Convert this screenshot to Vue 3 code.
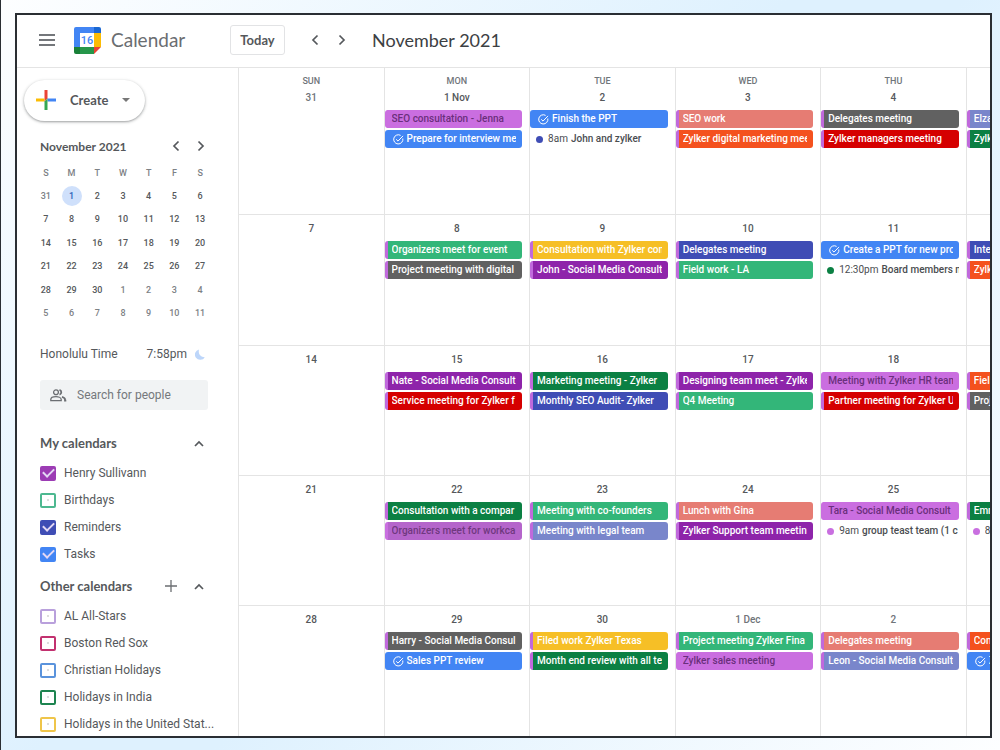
<script setup>
import { ref } from 'vue'

const weekdays = ['S', 'M', 'T', 'W', 'T', 'F', 'S']
const miniWeeks = [
  [31, 1, 2, 3, 4, 5, 6],
  [7, 8, 9, 10, 11, 12, 13],
  [14, 15, 16, 17, 18, 19, 20],
  [21, 22, 23, 24, 25, 26, 27],
  [28, 29, 30, 1, 2, 3, 4],
  [5, 6, 7, 8, 9, 10, 11],
]
const isOutside = (week, day) => (week === 0 && day > 20) || (week > 3 && day < 20)
const isToday = (week, day) => week === 0 && day === 1

const myCalendars = ref([
  { name: 'Henry Sullivann', color: 'violet', on: true },
  { name: 'Birthdays', color: 'mint', on: false },
  { name: 'Reminders', color: 'indigo', on: true },
  { name: 'Tasks', color: 'azure', on: true },
])
const otherCalendars = ref([
  { name: 'AL All-Stars', color: 'lilac', on: false },
  { name: 'Boston Red Sox', color: 'crimson', on: false },
  { name: 'Christian Holidays', color: 'sky', on: false },
  { name: 'Holidays in India', color: 'forest', on: false },
  { name: 'Holidays in the United Stat...', color: 'amber', on: false },
])

const ev = (title, color) => ({ kind: 'event', title, color })
const task = (title) => ({ kind: 'task', title, color: 'blue' })
const timed = (time, title, color) => ({ kind: 'timed', time, title, color })

const weeks = [
  [
    { head: 'SUN', date: '31', dim: true, items: [] },
    { head: 'MON', date: '1 Nov', items: [ev('SEO consultation - Jenna', 'orchid'), task('Prepare for interview me')] },
    { head: 'TUE', date: '2', items: [task('Finish the PPT'), timed('8am', 'John and zylker', 'indigo')] },
    { head: 'WED', date: '3', items: [ev('SEO work', 'salmon'), ev('Zylker digital marketing mee', 'orange')] },
    { head: 'THU', date: '4', items: [ev('Delegates meeting', 'gray'), ev('Zylker managers meeting', 'red')] },
    { head: '', date: '', items: [ev('Elza', 'slate'), ev('Zylk', 'green')] },
  ],
  [
    { date: '7', items: [] },
    { date: '8', items: [ev('Organizers meet for event', 'mint'), ev('Project meeting with digital', 'gray')] },
    { date: '9', items: [ev('Consultation with Zylker con', 'yellow'), ev('John - Social Media Consult', 'purple')] },
    { date: '10', items: [ev('Delegates meeting', 'indigo'), ev('Field work - LA', 'mint')] },
    { date: '11', items: [task('Create a PPT for new pro'), timed('12:30pm', 'Board members m', 'green')] },
    { date: '', items: [ev('Inte', 'indigo'), ev('Zylk', 'orange')] },
  ],
  [
    { date: '14', items: [] },
    { date: '15', items: [ev('Nate - Social Media Consult', 'purple'), ev('Service meeting for Zylker f', 'red')] },
    { date: '16', items: [ev('Marketing meeting - Zylker', 'green'), ev('Monthly SEO Audit- Zylker', 'indigo')] },
    { date: '17', items: [ev('Designing team meet - Zylke', 'purple'), ev('Q4 Meeting', 'mint')] },
    { date: '18', items: [ev('Meeting with Zylker HR team', 'orchid'), ev('Partner meeting for Zylker U', 'red')] },
    { date: '', items: [ev('Fiel', 'orange'), ev('Proj', 'gray')] },
  ],
  [
    { date: '21', items: [] },
    { date: '22', items: [ev('Consultation with a compar', 'green'), ev('Organizers meet for workca', 'plum')] },
    { date: '23', items: [ev('Meeting with co-founders', 'mint'), ev('Meeting with legal team', 'slate')] },
    { date: '24', items: [ev('Lunch with Gina', 'salmon'), ev('Zylker Support team meetin', 'purple')] },
    { date: '25', items: [ev('Tara - Social Media Consult', 'orchid'), timed('9am', 'group teast team (1 c', 'orchid')] },
    { date: '', items: [ev('Emm', 'green'), timed('8', '', 'orchid')] },
  ],
  [
    { date: '28', items: [] },
    { date: '29', items: [ev('Harry - Social Media Consul', 'gray'), task('Sales PPT review')] },
    { date: '30', items: [ev('Filed work Zylker Texas', 'yellow'), ev('Month end review with all te', 'green')] },
    { date: '1 Dec', dim: true, items: [ev('Project meeting Zylker Fina', 'mint'), ev('Zylker sales meeting', 'orchid')] },
    { date: '2', dim: true, items: [ev('Delegates meeting', 'salmon'), ev('Leon - Social Media Consult', 'slate')] },
    { date: '', items: [ev('Con', 'orange'), task('Z')] },
  ],
]
</script>

<template>
  <div class="page">
    <div class="window">
      <header class="topbar">
        <button class="icon-btn" aria-label="Main menu">
          <svg width="16" height="12" viewBox="0 0 16 12"><path d="M0 1h16M0 6h16M0 11h16" stroke="#74777b" stroke-width="2" /></svg>
        </button>
        <svg class="logo" width="27" height="27" viewBox="0 0 27 27" aria-hidden="true">
          <path d="M2 0H20V6H6V20H0V2Q0 0 2 0Z" fill="#4285f4" />
          <path d="M20 0H25Q27 0 27 2V6H20Z" fill="#1a67d2" />
          <path d="M20 6H27V20H20Z" fill="#fbbc04" />
          <path d="M6 20H20V27H6Z" fill="#26964a" />
          <path d="M0 20H6V27H2Q0 27 0 25Z" fill="#188038" />
          <path d="M20 20H27L20 27Z" fill="#ea4335" />
          <path d="M6 6H20V20H6Z" fill="#fff" />
          <text x="13" y="17" text-anchor="middle" class="logo-text">16</text>
        </svg>
        <span class="brand">Calendar</span>
        <button class="today">Today</button>
        <button class="icon-btn prev" aria-label="Previous month">
          <svg width="8" height="12" viewBox="0 0 8 12"><path d="M6.5 1.5 2 6l4.5 4.5" class="chev" /></svg>
        </button>
        <button class="icon-btn next" aria-label="Next month">
          <svg width="8" height="12" viewBox="0 0 8 12"><path d="M1.5 1.5 6 6l-4.5 4.5" class="chev" /></svg>
        </button>
        <h1>November 2021</h1>
      </header>

      <div class="body">
        <aside class="sidebar">
          <button class="create">
            <svg width="20" height="20" viewBox="0 0 20 20" aria-hidden="true">
              <path d="M8.5 0h3v8.500l-3 3Z" fill="#ea4335" />
              <path d="M0 8.500h8.500v3H0Z" fill="#fbbc04" />
              <path d="M11.500 8.500H20v3h-8.500Z" fill="#4285f4" />
              <path d="M8.500 11.500l3-3V20h-3Z" fill="#34a853" />
            </svg>
            <span>Create</span>
            <svg width="8" height="4" viewBox="0 0 8 4" aria-hidden="true"><path d="M0 0h8L4 4Z" fill="#777" /></svg>
          </button>

          <div class="mini-head">
            <h2>November 2021</h2>
            <button class="icon-btn" aria-label="Previous">
              <svg width="8" height="12" viewBox="0 0 8 12"><path d="M6.500 1.500 2 6l4.500 4.500" class="chev" /></svg>
            </button>
            <button class="icon-btn" aria-label="Next">
              <svg width="8" height="12" viewBox="0 0 8 12"><path d="M1.500 1.500 6 6l-4.500 4.500" class="chev" /></svg>
            </button>
          </div>
          <table class="mini">
            <thead>
              <tr><th v-for="(d, i) in weekdays" :key="i" scope="col">{{ d }}</th></tr>
            </thead>
            <tbody>
              <tr v-for="(week, w) in miniWeeks" :key="w">
                <td v-for="d in week" :key="d" :class="{ outside: isOutside(w, d) }">
                  <span :class="{ current: isToday(w, d) }">{{ d }}</span>
                </td>
              </tr>
            </tbody>
          </table>

          <div class="clock">
            <span>Honolulu Time</span>
            <span class="time">7:58pm</span>
            <svg width="10" height="11" viewBox="0 0 10 11" aria-hidden="true"><path d="M4 0.400A5.300 5.300 0 1 0 9.800 8.200C6 8.400 2.800 5 4 0.400Z" fill="#bdd6fa" /></svg>
          </div>

          <label class="search">
            <svg width="17" height="13" viewBox="0 0 17 13" fill="none" stroke="#6b6e72" stroke-width="1.300" aria-hidden="true">
              <circle cx="6" cy="3.300" r="2.400" />
              <path d="M0.800 11.700V10.500C0.800 8.500 4 7.700 6 7.700s5.200.8 5.200 2.800v1.200Z" />
              <path d="M9.500 0.900a2.500 2.500 0 0 1 0 4.800" stroke-width="1.800" />
              <path d="M12 7.900c1.600.5 3 1.300 3 2.600v1.200h1.300" stroke-width="1.800" />
            </svg>
            <input type="text" placeholder="Search for people" aria-label="Search for people" />
          </label>

          <div class="section-head first">
            <h2>My calendars</h2>
            <button class="icon-btn" aria-label="Collapse my calendars">
              <svg width="10" height="7" viewBox="0 0 10 7"><path d="M1 6 5 2l4 4" class="chev" /></svg>
            </button>
          </div>
          <ul class="cal-list">
            <li v-for="c in myCalendars" :key="c.name">
              <label><input v-model="c.on" type="checkbox" :class="'box-' + c.color" />{{ c.name }}</label>
            </li>
          </ul>

          <div class="section-head">
            <h2>Other calendars</h2>
            <button class="icon-btn" aria-label="Add calendar">
              <svg width="12" height="12" viewBox="0 0 12 12"><path d="M6 0v12M0 6h12" stroke="#6b6e72" stroke-width="1.300" /></svg>
            </button>
            <button class="icon-btn" aria-label="Collapse other calendars">
              <svg width="10" height="7" viewBox="0 0 10 7"><path d="M1 6 5 2l4 4" class="chev" /></svg>
            </button>
          </div>
          <ul class="cal-list">
            <li v-for="c in otherCalendars" :key="c.name">
              <label><input v-model="c.on" type="checkbox" :class="'box-' + c.color" />{{ c.name }}</label>
            </li>
          </ul>
        </aside>

        <main class="month">
          <section v-for="(week, w) in weeks" :key="w" class="week">
            <div v-for="(day, d) in week" :key="d" class="day">
              <div v-if="w === 0" class="weekday">{{ day.head }}</div>
              <div class="date" :class="{ dim: day.dim }">{{ day.date }}</div>
              <button v-for="(item, i) in day.items" :key="i" class="item" :class="[item.kind, 'c-' + item.color]">
                <svg v-if="item.kind === 'task'" width="11" height="11" viewBox="0 0 11 11" fill="none" stroke="#fff" aria-hidden="true">
                  <path d="M9.800 4.500A4.600 4.600 0 1 1 7.600 1.400" />
                  <path d="M3.200 5.300 5 7.100 10 1.900" />
                </svg>
                <i v-if="item.kind === 'timed'" class="dot"></i>
                <span class="title"><span v-if="item.time" class="at">{{ item.time }}</span>{{ item.title }}</span>
              </button>
            </div>
          </section>
        </main>
      </div>
    </div>
  </div>
</template>

<style>
body {
  margin: 0;
}
</style>

<style scoped>
* {
  box-sizing: border-box;
}
.page {
  min-height: 100vh;
  display: flex;
  padding: 13px 8px 12px 14px;
  border-left: 1px solid #2a2e33;
  background: linear-gradient(135deg, #fdfeff 0%, #def1fe 45%, #def1fe 55%, #fdfeff 100%);
  font-family: Roboto, "Liberation Sans", sans-serif;
  color: #55585b;
}
.window {
  flex: 1;
  min-width: 0;
  display: flex;
  flex-direction: column;
  border: 2px solid #2a2e33;
  background: #fff;
}
button {
  padding: 0;
  border: 0;
  background: none;
  font: inherit;
  color: inherit;
}
h1,
h2 {
  margin: 0;
  font-family: Lato, Roboto, sans-serif;
}
.chev {
  fill: none;
  stroke: #55585c;
  stroke-width: 1.7;
}
.icon-btn {
  display: flex;
  align-items: center;
  justify-content: center;
  width: 20px;
  height: 20px;
}
.topbar {
  display: flex;
  align-items: center;
  height: 53px;
  padding: 0 0 2px 20px;
  border-bottom: 1px solid #e4e4e4;
}
.logo {
  margin-left: 17px;
}
.logo-text {
  font: 500 11px Roboto, sans-serif;
  fill: #4285f4;
}
.brand {
  width: 129px;
  padding-left: 10px;
  font-family: Lato, sans-serif;
  font-size: 19px;
  line-height: 24px;
  color: #6a6d71;
}
.today {
  width: 55px;
  height: 30px;
  border: 1px solid #e2e3e5;
  border-radius: 3px;
  font: 700 13px Lato, sans-serif;
}
.prev {
  margin-left: 20px;
}
.next {
  margin-left: 7px;
}
h1 {
  margin-left: 20px;
  font-size: 18px;
  line-height: 24px;
  font-weight: 400;
  color: #3c4043;
}
.body {
  flex: 1;
  display: flex;
}
.sidebar {
  width: 221px;
  flex: none;
  padding: 12px 30px 0 23px;
}
.create {
  display: flex;
  align-items: center;
  width: 121px;
  height: 41px;
  margin-left: -16px;
  padding: 0 0 1px 12px;
  border-radius: 21px;
  background: #fff;
  box-shadow: 0 1px 2px rgba(60, 64, 67, 0.35), 0 1px 3px 1px rgba(60, 64, 67, 0.14);
  font: 700 13px Lato, sans-serif;
}
.create span {
  flex: none;
  width: 52px;
  margin-left: 14px;
  text-align: left;
}
.mini-head {
  display: flex;
  align-items: center;
  height: 24px;
  margin-top: 13px;
}
.mini-head h2,
.section-head h2 {
  flex: 1;
  font-size: 13px;
  font-weight: 700;
}
.mini-head h2 {
  font-size: 12px;
}
.mini-head .icon-btn {
  width: 25px;
}
.mini-head .icon-btn:last-child {
  margin-right: -5px;
}
.mini {
  width: 180px;
  height: 164px;
  margin: 3px 0 0 -7px;
  border-collapse: collapse;
  table-layout: fixed;
  font-size: 9px;
  line-height: 20px;
  text-align: center;
}
.mini th,
.mini td {
  height: 23px;
  padding: 0;
  font-weight: 500;
  vertical-align: middle;
}
.mini th,
.mini .outside {
  color: #7d8185;
}
.mini span {
  display: block;
  width: 20px;
  height: 20px;
  margin: 0 auto;
  border-radius: 50%;
}
.mini .current {
  background: #cfe0fb;
  color: #2c62b8;
}
.clock {
  display: flex;
  align-items: center;
  height: 24px;
  margin-top: 17px;
  padding-right: 3px;
  font-size: 12px;
}
.time {
  margin: 0 8px 0 auto;
}
.search {
  display: flex;
  align-items: center;
  height: 30px;
  margin-top: 14px;
  padding-left: 10px;
  border-radius: 3px;
  background: #f1f3f4;
}
.search input {
  flex: 1;
  min-width: 0;
  margin-left: 10px;
  padding: 0;
  border: 0;
  outline: 0;
  background: none;
  font: 12px Roboto, sans-serif;
}
.search input::placeholder {
  color: #75787c;
  opacity: 1;
}
.section-head {
  display: flex;
  align-items: center;
  height: 24px;
  margin-top: 8px;
}
.section-head.first {
  margin-top: 21px;
}
.section-head .icon-btn + .icon-btn {
  margin-left: 8px;
}
.section-head .icon-btn:last-child {
  margin-right: -1px;
}
.cal-list {
  display: flex;
  flex-direction: column;
  gap: 3px;
  margin: 6px 0 0;
  padding: 0;
  list-style: none;
}
.cal-list label {
  display: flex;
  align-items: center;
  height: 24px;
  font-size: 12px;
  white-space: nowrap;
}
.cal-list input {
  appearance: none;
  display: grid;
  place-items: center;
  flex: none;
  width: 16px;
  height: 15px;
  margin: 0 8px 0 0;
  border: 2px solid currentColor;
  border-radius: 2px;
}
.cal-list input::after {
  content: "";
  width: 2px;
  height: 2px;
  background: #ddd;
}
.cal-list input:checked {
  background: currentColor;
}
.cal-list input:checked::after {
  width: 9px;
  height: 5px;
  margin-bottom: 3px;
  border: solid #e3d8f4;
  border-width: 0 0 2px 2px;
  background: none;
  transform: rotate(-45deg);
}
.box-violet { color: #9c3cb4; }
.box-mint { color: #4db890; }
.box-indigo { color: #3f4db5; }
.box-azure { color: #4285f4; }
.box-lilac { color: #b9a0dc; }
.box-crimson { color: #c2316f; }
.box-sky { color: #5a93dc; }
.box-forest { color: #1d8450; }
.box-amber { color: #efc54a; }

.month {
  flex: 1;
  min-width: 0;
  display: grid;
  grid-template-rows: 146fr 131fr 130fr 130fr 131fr;
}
.week {
  display: grid;
  grid-template-columns: repeat(5, minmax(0, 6fr)) minmax(0, 1fr);
}
.week + .week {
  border-top: 1px solid #e4e4e4;
}
.day {
  overflow: hidden;
  border-left: 1px solid #e4e4e4;
}
.weekday {
  height: 16px;
  padding-top: 6px;
  font-size: 9px;
  line-height: 14px;
  font-weight: 500;
  text-align: center;
  color: #70757a;
}
.date {
  height: 26px;
  padding-top: 7px;
  font-size: 10px;
  line-height: 14px;
  font-weight: 500;
  text-align: center;
}
.date.dim {
  color: #70757a;
}
.item {
  display: flex;
  align-items: center;
  width: calc(100% - 7px);
  height: 18px;
  margin-bottom: 2px;
  padding: 0 6px 0 4px;
  border-left: 3px solid #c069dc;
  border-radius: 3px;
  font-size: 10px;
  line-height: 16px;
  font-weight: 500;
  text-align: left;
  color: #fff;
}
.day:last-child .item {
  width: 100%;
  padding-right: 0;
  border-top-right-radius: 0;
  border-bottom-right-radius: 0;
}
.title {
  flex: 1;
  min-width: 0;
  overflow: hidden;
  white-space: nowrap;
}
.task {
  padding-left: 8px;
  border-left: 0;
}
.task svg {
  flex: none;
  margin-right: 3px;
}
.item.timed {
  padding: 0 0 0 6px;
  border-left: 0;
  background: none;
  color: #4a4d51;
}
.dot {
  flex: none;
  width: 7px;
  height: 7px;
  margin-right: 5px;
  border-radius: 50%;
  background: #3f4db5;
}
.c-green .dot { background: #0b8043; }
.c-orchid .dot { background: #c96fe0; }
.at {
  margin-right: 3px;
  font-weight: 400;
}
.c-orchid { background: #ca6ee0; border-left-color: #ca6ee0; color: #6a2f7c; }
.c-plum { background: #b565cb; border-left-color: #c96fe0; color: #70387f; }
.c-blue { background: #4285f4; }
.c-salmon { background: #e67c73; }
.c-orange { background: #f4511e; }
.c-gray { background: #616161; }
.c-red { background: #d50000; }
.c-slate { background: #7986cb; }
.c-green { background: #0b8043; }
.c-mint { background: #33b679; }
.c-yellow { background: #f6bf26; }
.c-purple { background: #8e24aa; }
.c-indigo { background: #3f4db5; }
</style>
